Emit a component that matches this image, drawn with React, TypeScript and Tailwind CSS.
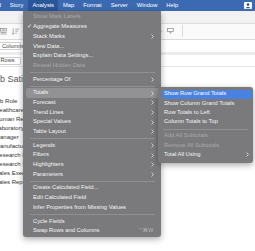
import React from "react";

type Item =
  | { label: string; disabled?: boolean; check?: boolean; sub?: boolean; hl?: boolean; shortcut?: string }
  | "sep";

const mainItems: Item[] = [
  { label: "Show Mark Labels", disabled: true },
  { label: "Aggregate Measures", check: true },
  { label: "Stack Marks", sub: true },
  { label: "View Data..." },
  { label: "Explain Data Settings..." },
  { label: "Reveal Hidden Data", disabled: true },
  "sep",
  { label: "Percentage Of", sub: true },
  "sep",
  { label: "Totals", sub: true, hl: true },
  { label: "Forecast", sub: true },
  { label: "Trend Lines", sub: true },
  { label: "Special Values", sub: true },
  { label: "Table Layout", sub: true },
  "sep",
  { label: "Legends", sub: true },
  { label: "Filters", sub: true },
  { label: "Highlighters", sub: true },
  { label: "Parameters", sub: true },
  "sep",
  { label: "Create Calculated Field..." },
  { label: "Edit Calculated Field" },
  { label: "Infer Properties from Missing Values" },
  "sep",
  { label: "Cycle Fields" },
  { label: "Swap Rows and Columns", shortcut: "⌃⌘W" },
];

const subItems: Item[] = [
  { label: "Show Row Grand Totals", hl: true },
  { label: "Show Column Grand Totals" },
  { label: "Row Totals to Left" },
  { label: "Column Totals to Top" },
  "sep",
  { label: "Add All Subtotals", disabled: true },
  { label: "Remove All Subtotals", disabled: true },
  { label: "Total All Using", sub: true },
];

const rows = [
  "Healthcare Representative",
  "Human Resources",
  "Laboratory Technician",
  "Manager",
  "Manufacturing Director",
  "Research Director",
  "Research Scientist",
  "Sales Executive",
  "Sales Representative",
];

const Chevron = () => (
  <svg width="3" height="5" viewBox="0 0 3 5" className="shrink-0">
    <path d="M0.6 0.5 L2.4 2.5 L0.6 4.5" fill="none" stroke="currentColor" strokeWidth="0.7" />
  </svg>
);

const menuBar = ["Dashboard", "Story", "Analysis", "Map", "Format", "Server", "Window", "Help"];

export default function App() {
  return (
    <div className="relative w-[255px] h-[251px] overflow-hidden bg-white font-['Liberation_Sans',Arial,sans-serif]">
      {/* menu bar */}
      <div className="flex h-[11px] items-stretch bg-[#3b6ab2] text-[5.8px] leading-none text-white">
        <div className="ml-[-32px] flex items-stretch">
          {menuBar.map((m) => (
            <div
              key={m}
              className={`flex items-center px-[4.5px] whitespace-nowrap ${m === "Analysis" ? "bg-[#2b5699]" : ""}`}
            >
              {m}
            </div>
          ))}
        </div>
        <div className="ml-auto mr-[3px] flex items-center">
          <svg width="8" height="7" viewBox="0 0 8 7">
            <rect x="0" y="0" width="8" height="7" rx="1" fill="#ffffff" />
            <circle cx="4" cy="2.6" r="1.3" fill="#2a4f8f" />
            <path d="M1.8 6.2 C2 4.6 6 4.6 6.2 6.2 Z" fill="#2a4f8f" />
          </svg>
        </div>
      </div>

      {/* tab strip */}
      <div className="h-[13px] bg-[#f1f1f2] border-b border-[#dddddd]" />

      {/* toolbar */}
      <div className="flex h-[15.5px] items-center bg-[#fafafa] border-b border-[#dadada]">
        <svg width="7" height="7" viewBox="0 0 7 7" className="ml-[0px]">
          <rect x="0.5" y="0.5" width="2.5" height="2.5" fill="none" stroke="#8a8a8a" strokeWidth="0.7" />
          <rect x="4" y="0.5" width="2.5" height="2.5" fill="none" stroke="#8a8a8a" strokeWidth="0.7" />
          <path d="M0.5 4.5 H6.5 M0.5 6 H6.5" stroke="#8a8a8a" strokeWidth="0.7" />
        </svg>
        <svg width="7" height="7" viewBox="0 0 7 7" className="ml-[5px]">
          <path d="M1.2 0.5 V6.3 M0.2 5.2 L1.2 6.3 L2.2 5.2" fill="none" stroke="#8a8a8a" strokeWidth="0.7" />
          <path d="M3.2 1.2 H6.8 M3.2 3.2 H5.8 M3.2 5.2 H4.8" stroke="#8a8a8a" strokeWidth="0.7" />
        </svg>
        <svg width="3" height="3" viewBox="0 0 3 3" className="ml-[140px]">
          <path d="M0 0.8 L3 0.8 L1.5 2.4 Z" fill="#8a8a8a" />
        </svg>
        <svg width="7" height="6" viewBox="0 0 7 6" className="ml-[5px]">
          <rect x="0.5" y="0.5" width="6" height="3" fill="none" stroke="#8a8a8a" strokeWidth="0.7" />
          <path d="M2.5 3.5 L3.5 5.5 L4.5 3.5" fill="none" stroke="#8a8a8a" strokeWidth="0.7" />
        </svg>
        <div className="ml-[8px] h-[12px] w-px bg-[#dadada]" />
      </div>

      {/* shelves */}
      <div className="flex h-[12.5px] items-center bg-white">
        <div className="ml-[-3px] h-[8px] w-[24px] flex items-center rounded-[1px] border border-[#cfcfcf] pl-[4px] text-[5.6px] text-[#444]">
          Columns
        </div>
      </div>
      <div className="h-[3px] bg-[#ececec]" />
      <div className="flex h-[12px] items-center bg-white border-b border-[#e4e4e4]">
        <div className="ml-[-3px] h-[8px] w-[24px] flex items-center rounded-[1px] border border-[#cfcfcf] pl-[2.5px] text-[5.6px] text-[#444]">
          Rows
        </div>
      </div>

      {/* sheet */}
      <div className="mt-[7.5px] h-[9px] ml-[-9.5px] whitespace-nowrap text-[9px] leading-[9px] text-[#555]">
        Job Satisfaction
      </div>
      <div className="mt-[13px] ml-[-6.3px] h-[9px] whitespace-nowrap text-[6px] leading-[9px] text-[#333]">Job Role</div>
      <div className="ml-[-5px] flex flex-col">
        {rows.map((r) => (
          <div key={r} className="h-[9px] whitespace-nowrap text-[6px] leading-[9px] text-[#333]">
            {r}
          </div>
        ))}
      </div>

      {/* Analysis menu */}
      <div className="absolute left-[23px] top-[11px] w-[138px] rounded-b-[3px] bg-[#7a7a7c] pt-[1.5px] pb-[1.5px] text-[5.8px] leading-none text-[#f4f4f4] shadow-[0_2px_6px_rgba(0,0,0,0.35)]">
        {mainItems.map((it, i) =>
          it === "sep" ? (
            <div key={i} className="flex h-[4px] items-center pl-[7px] pr-[6px]">
              <div className="h-px w-full bg-[#909092]" />
            </div>
          ) : (
            <div
              key={i}
              className={`mx-[2.5px] flex h-[9.7px] items-center rounded-[2px] pl-[1.5px] pr-[5px] ${it.hl ? "bg-[#929294]" : ""} ${it.disabled ? "text-[#a9a9ab]" : ""}`}
            >
              <span className="w-[6px] shrink-0 text-[5.5px]">{it.check ? "✓" : ""}</span>
              <span className="flex-1 whitespace-nowrap">{it.label}</span>
              {it.sub && <Chevron />}
              {it.shortcut && (
                <span className="whitespace-nowrap text-[5.5px] text-[#b4b4b6] font-['DejaVu_Sans',sans-serif]">
                  {it.shortcut}
                </span>
              )}
            </div>
          )
        )}
      </div>

      {/* Totals submenu */}
      <div className="absolute left-[158px] top-[87px] w-[95px] rounded-[3px] bg-[#7a7a7c] pt-[2.5px] pb-[3px] text-[5.8px] leading-none text-[#f4f4f4] shadow-[0_2px_6px_rgba(0,0,0,0.35)]">
        {subItems.map((it, i) =>
          it === "sep" ? (
            <div key={i} className="flex h-[5px] items-center px-[5px]">
              <div className="h-px w-full bg-[#909092]" />
            </div>
          ) : (
            <div
              key={i}
              className={`ml-[3.5px] mr-[1.5px] flex h-[9.3px] items-center rounded-[2px] pl-[2.5px] pr-[2.5px] ${it.hl ? "bg-[#4a82e4] text-white" : ""} ${it.disabled ? "text-[#a9a9ab]" : ""}`}
            >
              <span className="flex-1 whitespace-nowrap">{it.label}</span>
              {it.sub && <Chevron />}
            </div>
          )
        )}
      </div>
    </div>
  );
}
